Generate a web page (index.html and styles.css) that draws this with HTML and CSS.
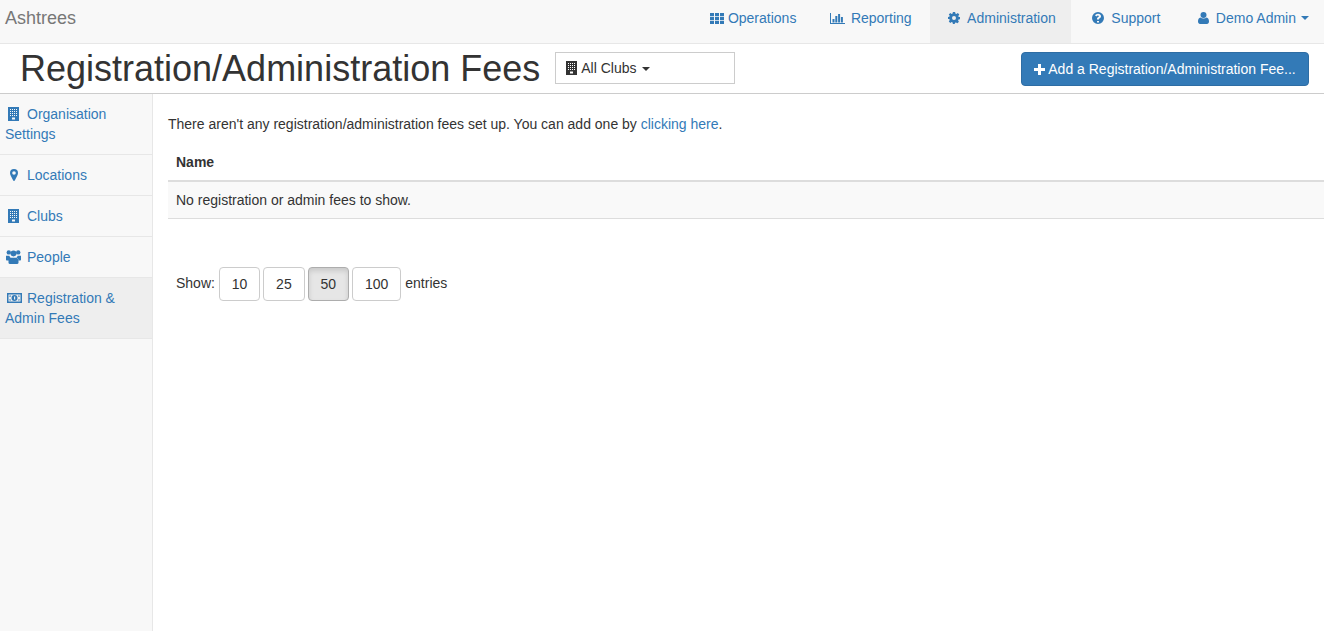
FILE: index.html
```html
<!DOCTYPE html>
<html lang="en">
<head>
<meta charset="utf-8">
<title>Registration/Administration Fees</title>
<link rel="stylesheet" href="styles.css">
</head>
<body>
<svg class="defs" width="0" height="0" aria-hidden="true">
  <symbol id="i-building" viewBox="0 0 11 14">
    <path fill-rule="evenodd" d="M0 0h11v14H0zM2 2v1h1V2zm2 0v1h1V2zm2 0v1h1V2zm2 0v1h1V2zM2 4v1h1V4zm2 0v1h1V4zm2 0v1h1V4zm2 0v1h1V4zM2 6v1h1V6zm2 0v1h1V6zm2 0v1h1V6zm2 0v1h1V6zM2 8v1h1V8zm2 0v1h1V8zm2 0v1h1V8zm2 0v1h1V8zM4 10.500v2h3v-2z"/>
  </symbol>
  <symbol id="i-marker" viewBox="0 0 8 12">
    <path fill-rule="evenodd" d="M4 0a4 4 0 0 1 4 4c0 1.100-.4 2-.9 3L4.800 11.400a.9.900 0 0 1-1.600 0L.9 7C.4 6 0 5.100 0 4a4 4 0 0 1 4-4zm0 2.200a1.800 1.800 0 1 0 0 3.600 1.800 1.800 0 0 0 0-3.600z"/>
  </symbol>
  <symbol id="i-users" viewBox="0 0 15 14">
    <circle cx="2.800" cy="2.400" r="2.200"/><circle cx="12.200" cy="2.400" r="2.200"/><circle cx="7.500" cy="3.400" r="3"/>
    <path d="M0 5.800h3.300c.3.800.7 1.500 1.200 2-1 .4-1.700 1.400-1.900 2.700H1c-.6 0-1-.3-1-1zM15 5.800h-3.300c-.3.800-.7 1.500-1.200 2 1 .4 1.700 1.400 1.900 2.700H14c.6 0 1-.3 1-1zM4.500 7.800h6c1.300 0 2 1.400 2 3v2c0 .7-.5 1.200-1.200 1.200H3.700c-.7 0-1.200-.5-1.200-1.200v-2c0-1.600.7-3 2-3z"/>
  </symbol>
  <symbol id="i-money" viewBox="0 0 15 10">
    <path fill-rule="evenodd" d="M0 0h15v10H0zM1.500 1.500v7h12v-7zM7.500 2a3 3 0 1 1 0 6 3 3 0 0 1 0-6zM7 3.500v3h1.200v-3zM2.500 2.500h1.500a1.500 1.500 0 0 1-1.500 1.500zm10 0v1.500A1.500 1.500 0 0 1 11 2.500zm-10 5V6A1.500 1.500 0 0 1 4 7.500zm10 0H11A1.500 1.500 0 0 1 12.500 6z"/>
  </symbol>
</svg>

<nav class="navbar">
  <span class="brand">Ashtrees</span>
  <ul class="nav-links">
    <li class="nav-item">
      <a href="#" class="nav-link">
        <svg class="ico ico-th" viewBox="0 0 14 11"><path d="M0 0h4v3.200H0zM5 0h4v3.200H5zM10 0h4v3.200h-4zM0 3.900h4v3.200H0zM5 3.900h4v3.200H5zM10 3.900h4v3.200h-4zM0 7.800h4V11H0zM5 7.800h4V11H5zM10 7.800h4V11h-4z"/></svg>
        <span>Operations</span>
      </a>
    </li>
    <li class="nav-item">
      <a href="#" class="nav-link">
        <svg class="ico ico-chart" viewBox="0 0 15 11"><path d="M0 0h1v10h14v1H0zM2.500 6h2v3.500h-2zM5.300 3h2v6.500h-2zM8.100 1h2v8.500h-2zM10.900 4h2v5.500h-2z"/></svg>
        <span>Reporting</span>
      </a>
    </li>
    <li class="nav-item active">
      <a href="#" class="nav-link">
        <svg class="ico ico-cog" viewBox="0 0 12 12"><path fill-rule="evenodd" d="M4.900 0h2.200l.3 1.600 1 .4L9.800 1l1.500 1.500-1 1.400.4 1L12 5v2.200l-1.500.3-.4 1 .8 1.300-1.500 1.500-1.400-.9-1 .4-.3 1.200H4.900l-.3-1.600-1-.4-1.300.9L.8 9.400l.9-1.300-.4-1L0 6.900V5l1.300-.2.4-1-.9-1.300L2.300 1l1.300.9 1-.4zM6 4a2 2 0 1 0 0 4 2 2 0 0 0 0-4z"/></svg>
        <span>Administration</span>
      </a>
    </li>
    <li class="nav-item">
      <a href="#" class="nav-link">
        <svg class="ico ico-q" viewBox="0 0 12 12"><path fill-rule="evenodd" d="M6 0a6 6 0 1 1 0 12A6 6 0 0 1 6 0zM5 9v1.500h2V9zM6 1.800c-1.400 0-2.400.7-2.900 1.800l1.400.9c.3-.6.700-1 1.400-1 .6 0 1 .3 1 .7 0 .5-.4.700-1 1-.7.400-.9.900-.9 1.500v.7h2v-.4c0-.3.200-.5.700-.8.700-.4 1.300-1 1.300-2 0-1.500-1.300-2.400-3-2.400z"/></svg>
        <span>Support</span>
      </a>
    </li>
    <li class="nav-item nav-user">
      <a href="#" class="nav-link">
        <svg class="ico ico-user" viewBox="0 0 11 12"><circle cx="5.500" cy="3" r="3"/><path d="M2.400 5.500c.8.700 1.900 1.100 3.100 1.100s2.300-.4 3.100-1.100C10.100 5.800 11 7.300 11 9.600c0 1.400-.9 2.400-2 2.400H2c-1.100 0-2-1-2-2.400 0-2.300.9-3.800 2.400-4.100z"/></svg>
        <span>Demo Admin</span><span class="caret"></span>
      </a>
    </li>
  </ul>
</nav>

<header class="page-head">
  <h1 class="title">Registration/Administration Fees</h1>
  <button class="club-select" type="button">
    <svg class="club-ico" viewBox="0 0 11 14"><use href="#i-building"/></svg>
    <span>All Clubs <span class="caret dark"></span></span>
  </button>
  <button class="btn-add" type="button">
    <svg class="plus" viewBox="0 0 11 11"><path d="M4 0h3v4h4v3H7v4H4V7H0V4h4z"/></svg>
    <span>Add a Registration/Administration Fee...</span>
  </button>
</header>

<div class="layout">
  <aside class="sidebar">
    <a href="#" class="side-item">
      <svg class="side-ico s-building" viewBox="0 0 11 14"><use href="#i-building"/></svg><span class="side-gap"></span>Organisation Settings
    </a>
    <a href="#" class="side-item">
      <svg class="side-ico s-marker" viewBox="0 0 8 12"><use href="#i-marker"/></svg><span class="side-gap"></span>Locations
    </a>
    <a href="#" class="side-item">
      <svg class="side-ico s-building" viewBox="0 0 11 14"><use href="#i-building"/></svg><span class="side-gap"></span>Clubs
    </a>
    <a href="#" class="side-item">
      <svg class="side-ico s-users" viewBox="0 0 15 14"><use href="#i-users"/></svg><span class="side-gap"></span>People
    </a>
    <a href="#" class="side-item current">
      <svg class="side-ico s-money" viewBox="0 0 15 10"><use href="#i-money"/></svg><span class="side-gap"></span>Registration &amp; Admin Fees
    </a>
  </aside>

  <main class="content">
    <p class="intro">There aren't any registration/administration fees set up. You can add one by <a href="#">clicking here</a>.</p>
    <table class="fees">
      <thead><tr><th>Name</th></tr></thead>
      <tbody><tr><td>No registration or admin fees to show.</td></tr></tbody>
    </table>
    <div class="pager">
      <span class="pager-label">Show:</span>
      <button class="page-btn" type="button">10</button>
      <button class="page-btn" type="button">25</button>
      <button class="page-btn on" type="button">50</button>
      <button class="page-btn" type="button">100</button>
      <span class="pager-label">entries</span>
    </div>
  </main>
</div>
</body>
</html>
```
FILE: styles.css
```css
* { box-sizing: border-box; }
html, body { height: 100%; }
body {
  margin: 0;
  font: 14px/20px "Liberation Sans", Arial, sans-serif;
  color: #333;
  background: #fff;
  display: flex;
  flex-direction: column;
  overflow: hidden;
}
a { color: #337ab7; text-decoration: none; }
.defs { position: absolute; }
svg { fill: currentColor; }

.navbar {
  height: 44px;
  flex: none;
  display: flex;
  justify-content: space-between;
  background: #f8f8f8;
  border-bottom: 1px solid #e7e7e7;
}
.brand { font-size: 18px; line-height: 36px; padding-left: 5px; color: #777; }
.nav-links { display: flex; gap: 3.5px; margin: 0; padding: 0; list-style: none; }
.nav-item { height: 43px; }
.nav-item.active { background: #eee; }
.nav-link { display: flex; align-items: center; height: 36px; padding: 0 15px; white-space: nowrap; }
.nav-user .nav-link { padding-left: 16px; }
.nav-user .caret { margin-left: 5px; }
.ico { flex: none; }
.ico-th { width: 14px; height: 11px; margin-right: 4px; }
.ico-chart { width: 15px; height: 11px; margin-right: 6px; }
.ico-cog { width: 12px; height: 12px; margin: 0 7px 0 3px; }
.ico-q { width: 12px; height: 12px; margin: 0 7px 0 3px; }
.ico-user { width: 11px; height: 12px; margin: 0 7px 0 3px; }
.caret {
  display: inline-block;
  margin-left: 4px;
  border-top: 4px solid;
  border-left: 4px solid transparent;
  border-right: 4px solid transparent;
  vertical-align: middle;
}
.caret.dark { margin-left: 2px; }

.page-head {
  height: 50px;
  flex: none;
  display: flex;
  align-items: flex-start;
  padding: 8px 15px 0 20px;
  border-bottom: 1px solid #ccc;
}
.title { margin: 0 15px 0 0; font-size: 36px; line-height: 34px; font-weight: 400; color: #333; white-space: nowrap; }
.club-select {
  width: 180px;
  height: 32px;
  padding: 0 10px;
  display: flex;
  align-items: center;
  font: inherit;
  color: #333;
  background: #fff;
  border: 1px solid #ccc;
  white-space: nowrap;
}
.club-ico { width: 11px; height: 14px; margin-right: 4px; flex: none; }
.btn-add {
  margin-left: auto;
  width: 288px;
  height: 34px;
  display: flex;
  align-items: center;
  justify-content: center;
  font: inherit;
  color: #fff;
  background: #337ab7;
  border: 1px solid #2e6da4;
  border-radius: 4px;
  white-space: nowrap;
}
.plus { width: 11px; height: 11px; margin-right: 3px; flex: none; }

.layout { flex: 1; display: flex; min-height: 0; }
.sidebar { width: 153px; flex: none; background: #f8f8f8; border-right: 1px solid #e7e7e7; }
.side-item { display: block; padding: 10px 5px; border-bottom: 1px solid #e7e7e7; }
.side-item.current { background: #eee; }
.side-ico { display: inline-block; vertical-align: -2px; }
.side-gap { display: inline-block; }
.s-building { width: 11px; height: 14px; margin-left: 3px; }
.s-building + .side-gap { width: 8px; }
.s-marker { width: 8px; height: 12px; margin-left: 5px; vertical-align: -1px; }
.s-marker + .side-gap { width: 9px; }
.s-users { width: 15px; height: 14px; margin-left: 1px; vertical-align: -2px; }
.s-users + .side-gap { width: 6px; }
.s-money { width: 15px; height: 10px; margin-left: 2px; vertical-align: 0; }
.s-money + .side-gap { width: 5px; }

.content { flex: 1; padding: 20px 0 0 15px; min-width: 0; }
.intro { margin: 0 0 10px; }
.fees { width: 100%; border-collapse: collapse; }
.fees th { text-align: left; padding: 8px; border-bottom: 2px solid #ddd; line-height: 20px; }
.fees td { padding: 8px; border-bottom: 1px solid #ddd; background: #f9f9f9; }
.pager { display: flex; align-items: center; margin-top: 48px; padding-left: 8px; }
.pager-label { margin-right: 3.75px; padding-bottom: 2px; }
.page-btn {
  height: 34px;
  margin-right: 2.85px;
  padding: 6px 12px;
  font: inherit;
  color: #333;
  background: #fff;
  border: 1px solid #ccc;
  border-radius: 4px;
}
.page-btn.on { background: #e6e6e6; border-color: #adadad; box-shadow: inset 0 3px 5px rgba(0,0,0,.125); }
.page-btn:nth-of-type(4) { margin-right: 4px; }
```
